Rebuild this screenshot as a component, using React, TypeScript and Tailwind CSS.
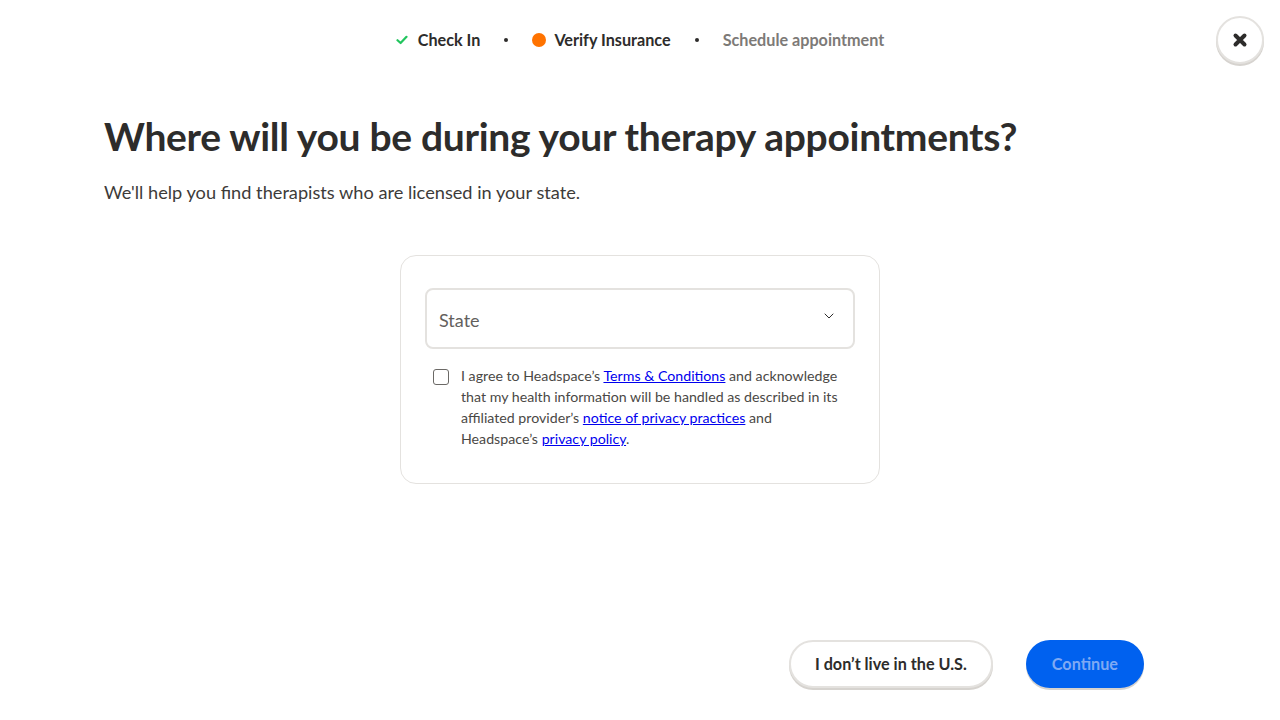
import { ChevronDown } from 'lucide-react';

const font = { fontFamily: 'Lato, "Noto Sans", sans-serif' };

function Steps() {
  return (
    <div className="flex items-center justify-center pt-[30px] text-[16.2px] font-bold leading-5">
      <svg width="12" height="12" viewBox="0 0 12 12" className="mr-[10px]">
        <path d="M1.5 6.2 L4.6 9 L10.5 2.8" fill="none" stroke="#22c55e" strokeWidth="2.2" strokeLinecap="round" strokeLinejoin="round" />
      </svg>
      <span className="text-[#2d2c2b]">Check In</span>
      <span className="mx-[24px] h-[4px] w-[4px] rounded-full bg-[#2d2c2b]" />
      <span className="mr-[8px] h-[14px] w-[14px] rounded-full bg-[#ff7300]" />
      <span className="text-[#2d2c2b]">Verify Insurance</span>
      <span className="mx-[24px] h-[4px] w-[4px] rounded-full bg-[#2d2c2b]" />
      <span className="text-[#7d7a77]">Schedule appointment</span>
    </div>
  );
}

export default function App() {
  return (
    <div className="relative flex h-[720px] w-full flex-col bg-white" style={font}>
      <Steps />
      <button className="absolute right-[16px] top-[16px] flex h-[48px] w-[48px] items-center justify-center rounded-full border-2 border-[#e4e2df] bg-white shadow-[0_2px_0_#d6d3cf]">
        <svg width="16" height="16" viewBox="0 0 16 16">
          <path d="M3.5 3.5 L12.5 12.5 M12.5 3.5 L3.5 12.5" stroke="#2d2c2b" strokeWidth="4" strokeLinecap="round" />
        </svg>
      </button>

      <div className="px-[104px] pt-[62px]">
        <h1 className="text-[39px] font-bold leading-[48px] tracking-[-0.3px] text-[#2d2c2b]">
          Where will you be during your therapy appointments?
        </h1>
        <p className="mt-[20px] text-[18.2px] leading-6 text-[#3d3b39]">
          We'll help you find therapists who are licensed in your state.
        </p>
      </div>

      <div className="mt-[51px] flex justify-center">
        <div className="w-[480px] rounded-[16px] border border-[#e4e2df] px-[24px] pb-[34px] pt-[32px]">
          <div className="flex h-[61px] items-center justify-between rounded-[8px] border-2 border-[#e4e2df] pl-[12px] pr-[16px]">
            <span className="pt-[4px] text-[18px] text-[#63605d]">State</span>
            <ChevronDown size={16} strokeWidth={1.5} className="mb-[6px] text-[#2d2c2b]" />
          </div>
          <div className="mt-[16px] flex gap-[12px] pl-[8px]">
            <span className="mt-[4px] h-[16px] w-[16px] shrink-0 rounded-[3px] border border-[#6b6966] bg-white" />
            <p className="whitespace-nowrap text-[14.2px] leading-[21px] text-[#4a4845]">
              I agree to Headspace’s <a className="text-[#0000ee] underline" href="#">Terms &amp; Conditions</a> and acknowledge
              <br />
              that my health information will be handled as described in its
              <br />
              affiliated provider’s <a className="text-[#0000ee] underline" href="#">notice of privacy practices</a> and
              <br />
              Headspace’s <a className="text-[#0000ee] underline" href="#">privacy policy</a>.
            </p>
          </div>
        </div>
      </div>

      <div className="mt-auto flex justify-end gap-[33px] pb-[32px] pr-[136px]">
        <button className="h-[48px] rounded-full border-2 border-[#e4e2df] bg-white px-[24px] text-[16.2px] font-bold text-[#2d2c2b] shadow-[0_2px_0_#d6d3cf]">
          I don’t live in the U.S.
        </button>
        <button className="h-[48px] rounded-full bg-[#0061ef] px-[26px] text-[16.2px] font-bold text-[#7fa9f3] shadow-[0_2px_0_#d6d3cf]">
          Continue
        </button>
      </div>
    </div>
  );
}
